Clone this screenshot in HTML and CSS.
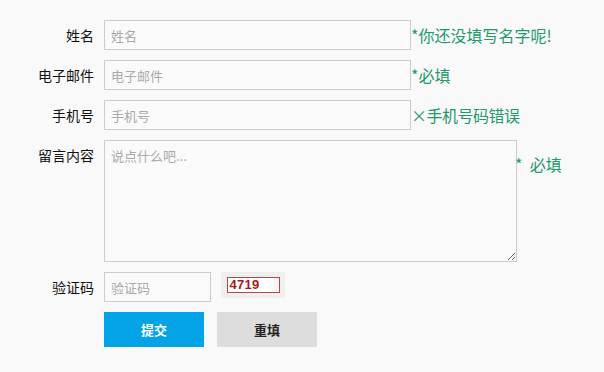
FILE: index.html
```
<!DOCTYPE html>
<html lang="zh">
<head>
<meta charset="utf-8">
<title>留言表单</title>
<link rel="stylesheet" href="styles.css">
</head>
<body>
<form class="form">
  <div class="row">
    <label class="label">姓名</label>
    <input class="field" type="text" placeholder="姓名">
    <span class="hint">*你还没填写名字呢!</span>
  </div>
  <div class="row">
    <label class="label">电子邮件</label>
    <input class="field" type="text" placeholder="电子邮件">
    <span class="hint">*必填</span>
  </div>
  <div class="row">
    <label class="label">手机号</label>
    <input class="field" type="text" placeholder="手机号">
    <span class="hint hint-x">×手机号码错误</span>
  </div>
  <div class="row row-top">
    <label class="label">留言内容</label>
    <textarea class="area" placeholder="说点什么吧..."></textarea>
    <span class="hint hint-area">*&nbsp; 必填</span>
  </div>
  <div class="row">
    <label class="label">验证码</label>
    <input class="field field-code" type="text" placeholder="验证码">
    <span class="captcha"><span class="captcha-box">4719</span></span>
  </div>
  <div class="row actions">
    <button type="button" class="btn btn-primary">提交</button>
    <button type="button" class="btn btn-reset">重填</button>
  </div>
</form>
</body>
</html>
```
FILE: styles.css
```
html, body {
  margin: 0;
  padding: 0;
  background: #f9f9f9;
}
body {
  font-family: "Noto Sans CJK SC", "Liberation Sans", sans-serif;
  color: #111;
}
.form {
  padding-top: 20px;
  display: flex;
  flex-direction: column;
  gap: 10px;
}
.row {
  display: flex;
  align-items: center;
}
.row-top {
  align-items: flex-start;
}
.label {
  width: 94px;
  margin-right: 10px;
  text-align: right;
  font-size: 14px;
  line-height: 30px;
  flex: none;
}
.field {
  width: 307px;
  height: 30px;
  box-sizing: border-box;
  border: 1px solid #cccccc;
  background: #fafafa;
  padding: 0 6px;
  font-family: inherit;
  font-size: 13px;
  color: #333;
  outline: none;
  margin: 0;
}
.field::placeholder, .area::placeholder {
  color: #aaaaaa;
}
.field-code {
  width: 107px;
}
.area {
  width: 413px;
  height: 122px;
  box-sizing: border-box;
  border: 1px solid #cccccc;
  background: #fafafa;
  padding: 6px 6px;
  font-family: inherit;
  font-size: 13px;
  line-height: 18px;
  margin: 0;
  outline: none;
  display: block;
}
.hint {
  color: #1e9a6c;
  font-size: 16px;
  line-height: 30px;
}
.hint-x {
  margin-left: 0;
  letter-spacing: -0.5px;
}
.hint-area {
  margin-top: 9px;
  margin-left: -2px;
}
.captcha {
  margin-left: 10px;
  width: 64px;
  height: 26px;
  background: #efefef;
  display: flex;
  align-items: center;
  justify-content: center;
  align-self: flex-start;
}
.captcha-box {
  width: 53px;
  height: 16px;
  box-sizing: border-box;
  border: 1px solid #b04848;
  background: linear-gradient(90deg, #fff 0, #fff 80%, #f2f2f2 100%);
  color: #a81818;
  font-family: "Liberation Sans", sans-serif;
  font-weight: bold;
  font-size: 13px;
  line-height: 14px;
  padding-left: 2px;
  letter-spacing: 0.3px;
}
.actions {
  padding-left: 104px;
  gap: 13px;
}
.btn {
  width: 100px;
  height: 35px;
  border: none;
  margin: 0;
  font-family: inherit;
  font-size: 13px;
  font-weight: bold;
  cursor: pointer;
}
.btn-primary {
  background: #04a2e6;
  color: #fff;
}
.btn-reset {
  background: #dddddd;
  color: #222;
}
```
